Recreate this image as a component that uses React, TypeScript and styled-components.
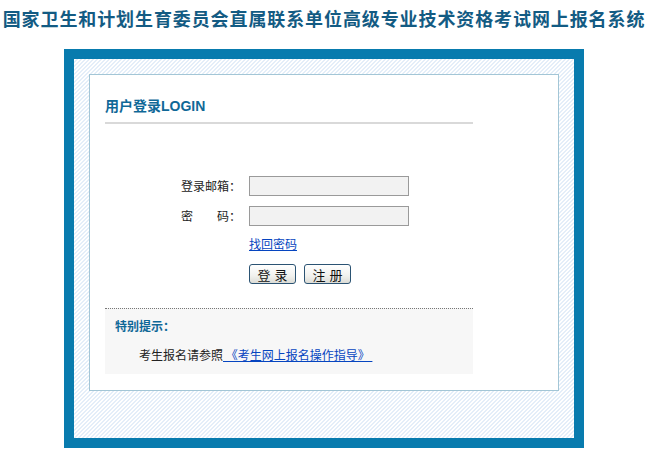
import React from 'react';
import styled, { createGlobalStyle } from 'styled-components';

const GlobalStyle = createGlobalStyle`
    body {
        margin: 0;
        background: #fff;
        font-family: "Noto Sans CJK SC", "DejaVu Sans", sans-serif;
        font-size: 12px;
        color: #222;
    }
`;

export const Page = styled.div`
    width: 648px;
    height: 461px;
    overflow: hidden;
`;

export const SiteTitle = styled.h1`
    margin: 0;
    padding-top: 7px;
    height: 49px;
    box-sizing: border-box;
    font-size: 18px;
    line-height: 22px;
    font-weight: bold;
    letter-spacing: 0.9px;
    text-align: center;
    white-space: nowrap;
    color: #135b83;
`;

export const Frame = styled.div`
    margin-left: 64px;
    width: 520px;
    height: 399px;
    box-sizing: border-box;
    border: 10px solid #087bae;
    padding: 15px 15px 0 15px;
    background: repeating-linear-gradient(
        -45deg,
        #ffffff 0px,
        #ffffff 1.5px,
        #e4eef9 1.5px,
        #e4eef9 2.83px
    );
`;

export const Panel = styled.div`
    width: 470px;
    height: 317px;
    box-sizing: border-box;
    border: 1px solid #a3c6d6;
    background: #fff;
    padding-left: 15px;
`;

export const Column = styled.div`
    width: 368px;
`;

export const Heading = styled.h2`
    margin: 0;
    padding: 23px 0 8px 0;
    font-family: "Liberation Sans", "Noto Sans CJK SC", sans-serif;
    font-size: 14px;
    line-height: 16px;
    font-weight: bold;
    color: #0f6897;
    border-bottom: 2px solid #d9d9d9;
`;

export const Form = styled.form`
    margin: 52px 0 0 72px;
    display: grid;
    grid-template-columns: 64px 160px;
    column-gap: 8px;
    align-items: center;
`;

export const Label = styled.label<{ spread?: boolean }>`
    display: flex;
    justify-content: ${p => (p.spread ? 'space-between' : 'flex-end')};
    padding-left: ${p => (p.spread ? '4px' : '0')};
    font-size: 12px;
    line-height: 20px;
    color: #222;
    white-space: nowrap;
`;

export const Input = styled.input`
    width: 160px;
    height: 20px;
    box-sizing: border-box;
    margin: 0;
    border: 1px solid #9a9a9a;
    background: #f2f2f2;
    font-size: 12px;
`;

export const Row = styled.div<{ top: number }>`
    grid-column: 2;
    margin-top: ${p => p.top}px;
    display: flex;
    gap: 8px;
`;

export const Field = styled.div<{ top: number }>`
    display: contents;
    & > * {
        margin-top: ${p => p.top}px;
    }
`;

export const Link = styled.a`
    color: #0645c0;
    text-decoration: underline;
    font-size: 12px;
    line-height: 16px;
    cursor: pointer;
`;

export const Button = styled.button`
    width: 47px;
    height: 20px;
    margin: 0;
    padding: 0;
    box-sizing: border-box;
    border: 1px solid #2b5373;
    border-radius: 3px;
    background: linear-gradient(#ffffff, #f1f1ee 60%, #dcdcd6);
    font-family: "Noto Sans CJK SC", sans-serif;
    font-size: 13px;
    line-height: 17px;
    letter-spacing: 4px;
    text-indent: 4px;
    color: #111;
`;

export const Notice = styled.div`
    margin-top: 24px;
    height: 66px;
    box-sizing: border-box;
    border-top: 1px dotted #777;
    background: #f7f7f7;
    padding: 9px 0 0 10px;
`;

export const NoticeTitle = styled.div`
    font-size: 12px;
    line-height: 16px;
    font-weight: bold;
    color: #0f6897;
`;

export const NoticeText = styled.div`
    margin: 13px 0 0 24px;
    font-size: 12px;
    line-height: 16px;
    color: #222;
`;

export default function App() {
    return (
        <Page>
            <GlobalStyle />
            <SiteTitle>国家卫生和计划生育委员会直属联系单位高级专业技术资格考试网上报名系统</SiteTitle>
            <Frame>
                <Panel>
                    <Column>
                        <Heading>用户登录LOGIN</Heading>
                        <Form onSubmit={e => e.preventDefault()}>
                            <Label>登录邮箱：</Label>
                            <Input type="text" />
                            <Field top={10}>
                                <Label spread><span>密</span><span>码：</span></Label>
                                <Input type="password" />
                            </Field>
                            <Row top={10}>
                                <Link>找回密码</Link>
                            </Row>
                            <Row top={12}>
                                <Button type="submit">登录</Button>
                                <Button type="button">注册</Button>
                            </Row>
                        </Form>
                        <Notice>
                            <NoticeTitle>特别提示：</NoticeTitle>
                            <NoticeText>
                                考生报名请参照<Link>&nbsp;《考生网上报名操作指导》&nbsp;</Link>
                            </NoticeText>
                        </Notice>
                    </Column>
                </Panel>
            </Frame>
        </Page>
    );
}
